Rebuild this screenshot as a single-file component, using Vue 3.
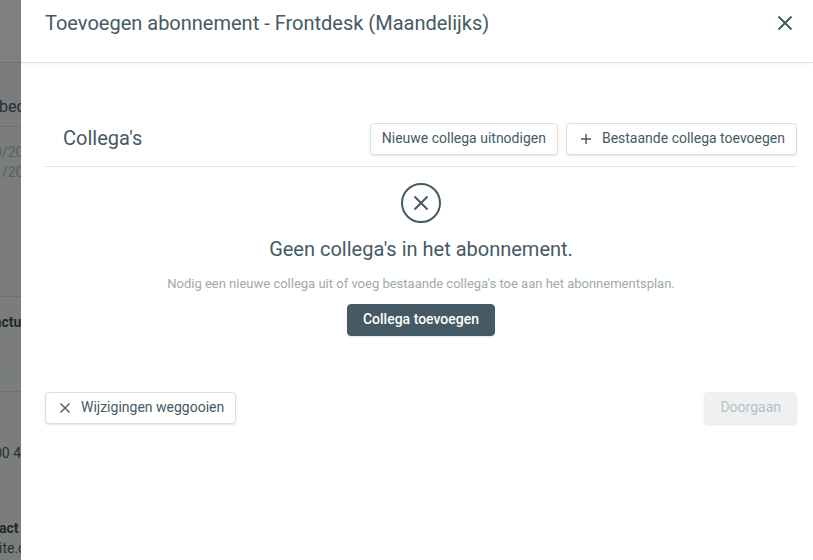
<script setup>
const title = 'Toevoegen abonnement - Frontdesk (Maandelijks)'
</script>

<template>
  <div class="screen">
    <div class="underlay">
      <div class="u-bar"></div>
      <div class="u-block u-heading"><p class="lead">bec</p></div>
      <div class="u-block u-dates">
        <p class="cut-digit">0/20</p>
        <p class="cut-digit">1/20</p>
      </div>
      <div class="u-block u-invoice"><p class="strong cut-digit">actu</p><span class="teal"></span></div>
      <div class="u-block u-contact">
        <p class="cut-digit dark">00 4</p>
        <div>
          <p class="strong cut-tiny">act</p>
          <p class="dark cut-tiny">ite.c</p>
        </div>
      </div>
    </div>

    <section class="dialog" role="dialog" aria-labelledby="dialog-title">
      <header class="dialog-head">
        <h1 id="dialog-title">{{ title }}</h1>
        <button class="close" type="button" aria-label="Sluiten">
          <svg width="16" height="16" viewBox="0 0 16 16"><path d="M1.5 1.5 14.5 14.5M14.5 1.5 1.5 14.5" /></svg>
        </button>
      </header>

      <main class="content">
        <div class="section-head">
          <h2>Collega's</h2>
          <div class="actions">
            <button class="btn" type="button">Nieuwe collega uitnodigen</button>
            <button class="btn with-icon" type="button">
              <svg class="plus" width="12" height="12" viewBox="0 0 12 12"><path d="M6 1V11M1 6H11" /></svg>
              Bestaande collega toevoegen
            </button>
          </div>
        </div>

        <div class="empty">
          <svg class="empty-icon" width="40" height="40" viewBox="0 0 40 40">
            <circle cx="20" cy="20" r="19" />
            <path d="M13.5 13.5 26.5 26.5M26.5 13.5 13.5 26.5" />
          </svg>
          <h2>Geen collega's in het abonnement.</h2>
          <p>Nodig een nieuwe collega uit of voeg bestaande collega's toe aan het abonnementsplan.</p>
          <button class="btn primary" type="button">Collega toevoegen</button>
        </div>

        <footer class="foot">
          <button class="btn with-icon" type="button">
            <svg width="12" height="12" viewBox="0 0 12 12"><path d="M1.5 1.5 10.5 10.5M10.5 1.5 1.5 10.5" /></svg>
            Wijzigingen weggooien
          </button>
          <button class="btn muted" type="button" disabled>Doorgaan</button>
        </footer>
      </main>
    </section>
  </div>
</template>

<style>
body {
  margin: 0;
}
</style>

<style scoped>
* {
  box-sizing: border-box;
}
.screen {
  display: grid;
  grid-template-columns: 21px minmax(0, 1fr);
  height: 100vh;
  overflow: hidden;
  font-family: Roboto, "Liberation Sans", sans-serif;
  color: #455a64;
}
h1,
h2,
p {
  margin: 0;
  font-weight: 400;
}

.underlay {
  display: flex;
  flex-direction: column;
  overflow: hidden;
  background: #7a7d7c;
  font-size: 14px;
  line-height: 20px;
  color: #565f63;
  white-space: nowrap;
}
.u-bar {
  height: 63px;
  flex: none;
  background: #7f7f7f;
  border-bottom: 1px solid #707272;
}
.u-block {
  flex: none;
  border-bottom: 1px solid #6d7070;
}
.u-heading {
  height: 64px;
  padding-top: 34px;
}
.u-dates {
  height: 170px;
  padding-top: 15px;
}
.u-invoice {
  height: 95px;
  padding-top: 15px;
}
.u-contact {
  display: flex;
  flex-direction: column;
  gap: 55px;
  padding-top: 51px;
  border-bottom: 0;
}
.lead {
  font-size: 16px;
  text-indent: -1px;
  color: #252f34;
}
.strong {
  font-weight: 700;
  color: #20292d;
}
.dark {
  color: #252f34;
}
.cut-digit {
  text-indent: -6px;
}
.cut-tiny {
  text-indent: -1px;
}
.teal {
  display: block;
  width: 1px;
  height: 2px;
  margin-top: 41px;
  background: #2f8577;
}

.dialog {
  background: #fff;
}
.dialog-head {
  display: flex;
  align-items: flex-start;
  justify-content: space-between;
  height: 63px;
  padding: 11px 16px 0 24px;
  border-bottom: 1px solid #e2e4e5;
  box-shadow: 0 1px 3px rgba(0, 0, 0, 0.06);
}
h1,
h2 {
  font-size: 20px;
  line-height: 24px;
}
.close {
  display: flex;
  padding: 4px;
  border: 0;
  background: none;
}
svg {
  flex: none;
  fill: none;
  stroke: #455a64;
  stroke-width: 2;
}
.btn svg {
  stroke-width: 1.4;
}
.content {
  padding: 60px 16px 0 24px;
}
.section-head {
  display: flex;
  align-items: flex-start;
  justify-content: space-between;
  padding: 0 0 11px 18px;
  border-bottom: 1px solid #e0e2e3;
}
.section-head h2 {
  line-height: 30px;
}
.actions {
  display: flex;
  gap: 8px;
}
.btn {
  display: flex;
  align-items: center;
  height: 32px;
  padding: 0 11px 2px;
  border: 1px solid #dcdfe0;
  border-radius: 4px;
  background: #fff;
  box-shadow: 0 1px 2px rgba(0, 0, 0, 0.1);
  font: inherit;
  font-size: 14px;
  line-height: 20px;
  color: #455a64;
}
.btn svg {
  margin-top: 2px;
}
.with-icon {
  gap: 10px;
  padding-left: 13px;
}
.primary {
  padding: 0 15px 2px;
  border-color: #455a64;
  background: #455a64;
  font-weight: 500;
  color: #fff;
}
.muted {
  padding: 0 15px 2px;
  border-color: #eff0f2;
  background: #eff0f2;
  color: #b7bfc3;
}
.empty {
  display: flex;
  flex-direction: column;
  align-items: center;
  padding: 16px 0 56px;
}
.empty h2 {
  margin-top: 14px;
}
.empty p {
  margin: 13px 0 10px;
  font-size: 13px;
  line-height: 20px;
  color: #a0a9ae;
}
.foot {
  display: flex;
  justify-content: space-between;
}
</style>
